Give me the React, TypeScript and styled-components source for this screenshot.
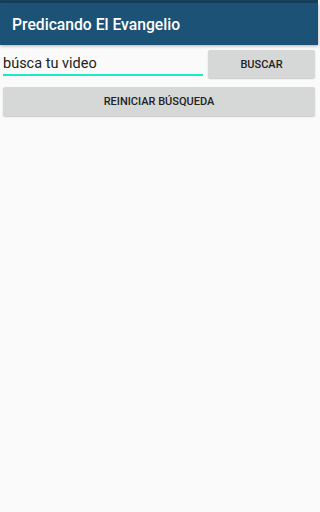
import React from 'react';
import styled, { createGlobalStyle } from 'styled-components';

const GlobalStyle = createGlobalStyle`
  html, body {
    margin: 0;
    padding: 0;
    background: #fafafa;
  }
  body {
    font-family: Roboto, "Noto Sans", sans-serif;
  }
`;

const Screen = styled.div`
  width: 318px;
  height: 512px;
  background: #fafafa;
  display: flex;
  flex-direction: column;
`;

const StatusBar = styled.div`
  height: 3px;
  background: #15405e;
`;

const AppBar = styled.header`
  height: 42px;
  background: #1c5275;
  display: flex;
  align-items: center;
  padding-left: 12px;
  box-shadow: 0 1px 3px rgba(0, 0, 0, 0.3);
`;

const Title = styled.h1`
  margin: 0;
  color: #ffffff;
  font-size: 15.7px;
  font-weight: 500;
`;

const Content = styled.main`
  display: flex;
  flex-direction: column;
  gap: 9px;
  padding: 5px 3px 0 3px;
`;

const SearchRow = styled.div`
  display: flex;
  align-items: flex-start;
  gap: 5px;
`;

const Input = styled.input`
  flex: 1;
  min-width: 0;
  height: 22px;
  padding: 2px 0 0 0;
  border: none;
  border-bottom: 2px solid #1de9c8;
  background: transparent;
  font-family: Roboto, sans-serif;
  font-size: 14.5px;
  color: #212121;
  outline: none;
`;

const Button = styled.button<{ $wide?: boolean }>`
  width: ${(p) => (p.$wide ? '100%' : '107px')};
  height: ${(p) => (p.$wide ? '29px' : '28px')};
  border: none;
  border-radius: 2px;
  background: #d6d7d7;
  box-shadow: 0 1px 1.5px rgba(0, 0, 0, 0.2);
  font-family: Roboto, sans-serif;
  font-size: 11px;
  font-weight: 500;
  color: #222222;
  text-transform: uppercase;
  padding: 0;
`;

export default function App() {
  return (
    <>
      <GlobalStyle />
      <Screen>
        <StatusBar />
        <AppBar>
          <Title>Predicando El Evangelio</Title>
        </AppBar>
        <Content>
          <SearchRow>
            <Input defaultValue="búsca tu video" />
            <Button>Buscar</Button>
          </SearchRow>
          <Button $wide>Reiniciar búsqueda</Button>
        </Content>
      </Screen>
    </>
  );
}
